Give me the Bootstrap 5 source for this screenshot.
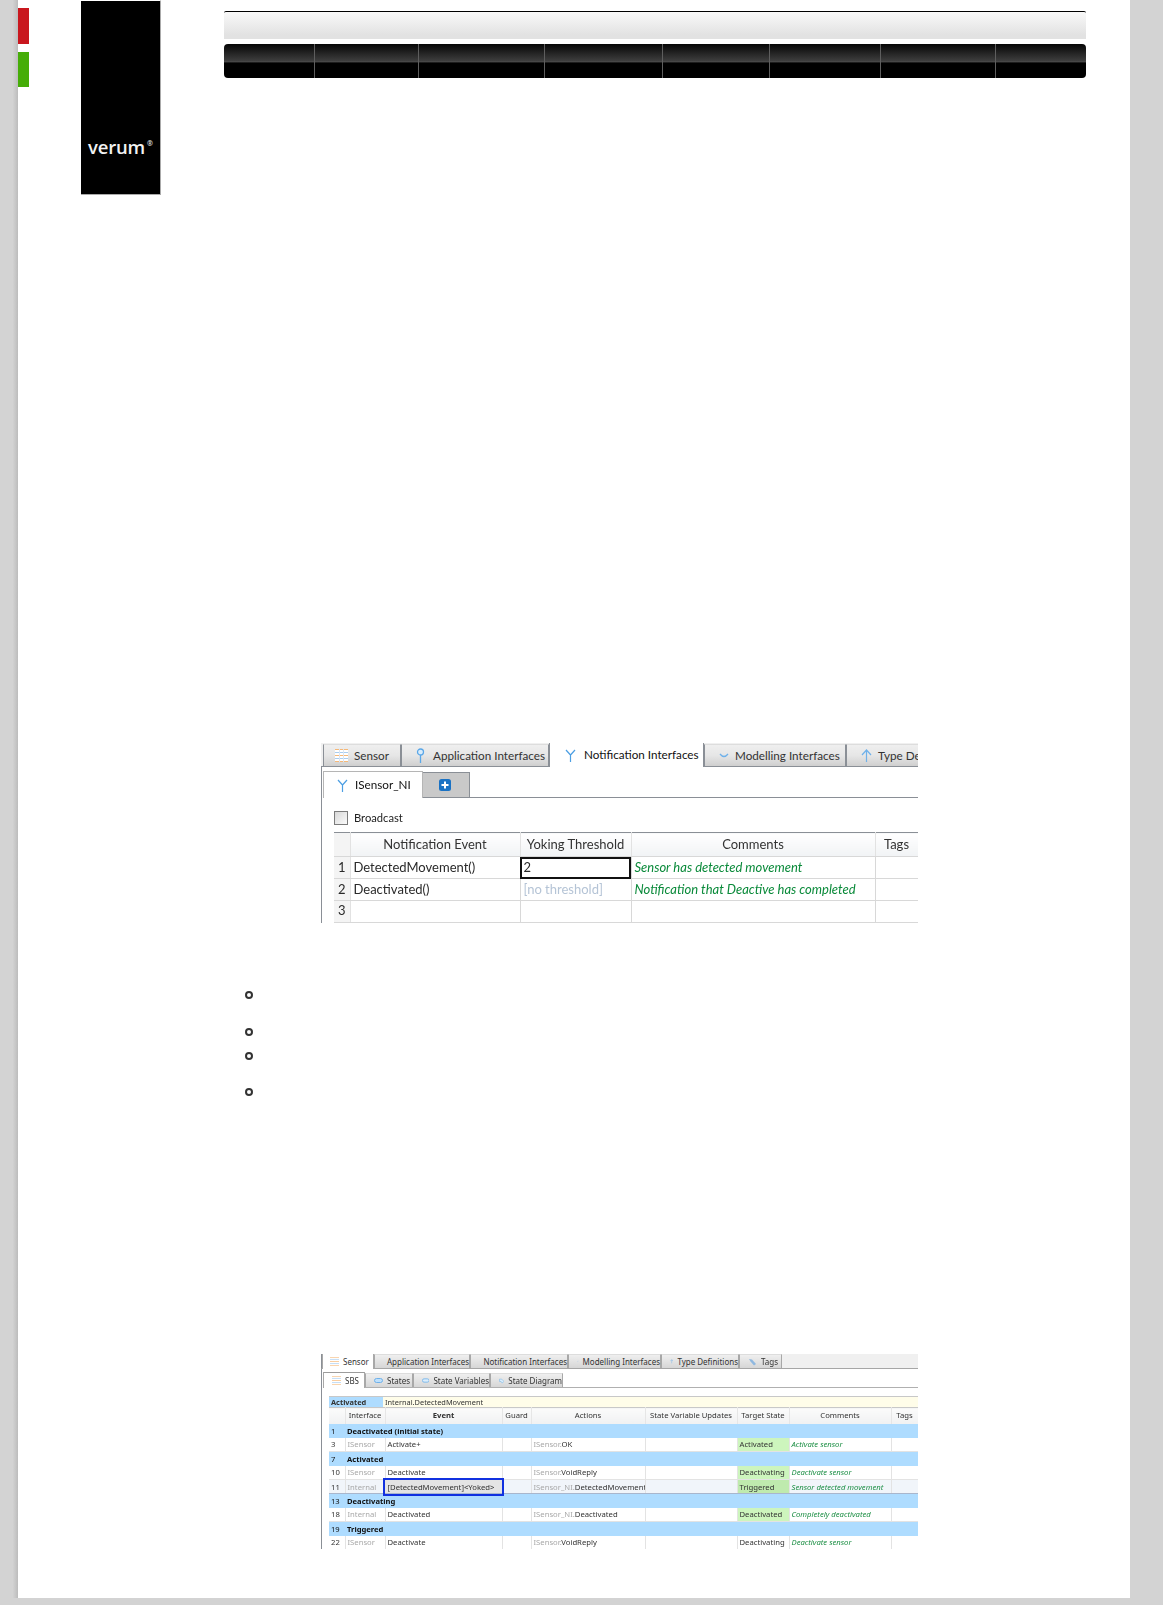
<!DOCTYPE html>
<html lang="en">
<head>
<meta charset="utf-8">
<title>Verum Dezyne</title>
<link rel="stylesheet" href="https://cdn.jsdelivr.net/npm/bootstrap@5.3.0/dist/css/bootstrap.min.css">
<style>
html,body{margin:0;background:#d3d3d3;}
body{font-family:"Lato","Liberation Sans",sans-serif;color:#222;}
.gutter{width:18px;flex:none;background:linear-gradient(to right,#d3d3d3 70%,#bcbcbc);}
.sheet{width:1112px;height:1598px;background:#fff;flex:none;}
.rail{width:11px;flex:none;padding-top:8px;}
.flag-red{height:36px;background:#c9171e;margin-bottom:8px;}
.flag-green{height:35px;background:#46ad08;}
.brand{width:80px;height:195px;margin-left:52px;flex:none;background:#000;border-right:1px solid #aaa;border-bottom:1px solid #aaa;border-top:1px solid #fff;color:#f2f2f2;padding:0 0 34px 7px;font-family:"Open Sans",sans-serif;font-weight:600;font-size:18.500px;line-height:26px;letter-spacing:-.2px;}
.brand sup{font-size:7px;top:-1.1em;margin-left:2px;}
.mainpane{width:862px;margin-left:63px;flex:none;}
.headbar{margin-top:11px;height:28px;border-top:1px solid #000;background:linear-gradient(#f9f9f9,#e2e2e2 85%);border-radius:2px 2px 0 0;}
.menu{margin-top:5px;height:34px;border-radius:4px;overflow:hidden;background:linear-gradient(#050505 0,#3e3e3e 50%,#4a4a4a 52%,#000 56%,#000 100%);list-style:none;padding:0;}
.menu li{border-right:1px solid #5e5e5e;}
.menu li:nth-child(1){width:91px}.menu li:nth-child(2){width:104px}.menu li:nth-child(3){width:126px}.menu li:nth-child(4){width:118px}.menu li:nth-child(5){width:107px}.menu li:nth-child(6){width:111px}.menu li:nth-child(7){width:115px}.menu li:nth-child(8){width:90px;border:0}
.shot{margin-left:97px;width:597px;overflow:hidden;position:relative;}
.shot1{margin-top:665px;height:180px;font-size:11.700px;filter:blur(.25px);}
.tabstrip{height:24px;background:#f0f0f0;border-bottom:1px solid #8a8f96;padding-left:2px;}
.tb{height:22px;border:1px solid #8a8f96;border-top-color:#ddd;border-bottom:0;background:linear-gradient(#efefef,#e6e6e6 50%,#cfcfcf);display:flex;align-items:center;white-space:nowrap;flex:none;color:#333;overflow:hidden;}
.tb svg{flex:none;}
.tb.on{height:25px;background:#fff;border-top-color:#8a8f96;margin-bottom:-1px;color:#111;}
.t1{width:78px;padding-left:11px;gap:6px}.t2{width:148px;padding-left:14px;gap:8px}.t3{width:155px;padding-left:15px;gap:8px}.t4{width:142px;padding-left:14px;gap:6px}.t5{width:80px;padding-left:14px;gap:6px}
.leftrule{border-left:1px solid #8a8f96;padding:4px 0 0 1px;height:156px;}
.subtabs{height:27px;border-bottom:1px solid #8a8f96;}
.tb.stb{width:100px;height:27px;background:#fff;border:1px solid #b5b5b5;border-bottom:0;padding-left:13px;gap:7px;margin-bottom:-1px;font-size:11.700px;z-index:1;}
.stb2{width:47px;height:25px;background:#c9c9c9;border-right:1px solid #8a8f96;border-top:1px solid #8a8f96;justify-content:center;padding-right:3px;}
.tickrow{height:14px;margin:13px 0 7px 11px;gap:6px;font-size:11.200px;line-height:14px;}
.tickbox{width:14px;height:14px;border:1px solid #7b7b7b;background:linear-gradient(135deg,#d8d8d8,#fbfbfb);}
.grid1{width:584px;margin-left:11px;table-layout:fixed;border-collapse:collapse;border-top:1px solid #8a8f96;font-size:13px;}
.grid1 th{font-weight:400;height:24px;background:linear-gradient(#fff,#f1f3f5);border-right:1px solid #e2e2e2;border-bottom:1px solid #d8d8d8;text-align:center;padding:1px 0 0;color:#333;white-space:nowrap;}
.grid1 td{height:22px;padding:1px 0 0 3px;border-right:1px solid #d8d8d8;border-bottom:1px solid #d8d8d8;white-space:nowrap;overflow:hidden;color:#2a2a2a;}
.grid1 tr:nth-child(2) td{height:21px;}
.grid1 td:first-child,.grid1 th:first-child{background:#f4f4f4;text-align:center;padding:0;border-right:1px solid #e2e2e2;}
.c1a{width:16px}.c1b{width:170px}.c1c{width:111px}.c1d{width:244px}.c1e{width:43px}
.note{color:#0a8a3a!important;font-style:italic;}
.dim{color:#b5c4d6!important;}
.focusbox{outline:2px solid #111;outline-offset:-2px;}
.dots{list-style:none;margin:68px 0 0 21px;padding:0;}
.dots li{position:relative;height:24px;}
.dots li.tall{height:37px;}
.dots li.tall2{height:36px;}
.dots li::before{content:"";position:absolute;left:0;top:0;width:8px;height:8px;border:2px solid #333;border-radius:50%;}
.shot2{margin-top:242px;height:195px;font-family:"Noto Sans",sans-serif;font-size:8px;color:#333;filter:blur(.35px);}
.shot2 .tabstrip2{height:15px;background:#f0f0f0;border-bottom:1px solid #a6a6a6;border-left:1px solid #8a8f96;}
.ttb{height:14px;border:1px solid #a8a8a8;border-top-color:#ddd;border-bottom:0;background:linear-gradient(#efefef,#d6d6d6);display:flex;align-items:center;gap:4px;padding-left:8px;white-space:nowrap;flex:none;}
.ttb.on{height:16px;background:#fff;border-top-color:#9c9c9c;margin-bottom:-1px;}
.w1{width:52px;padding-left:7px}.w2{width:96px}.w3{width:98px}.w4{width:93px}.w5{width:78px}.w6{width:43px}
.w7{width:42px}.w8{width:48px}.w9{width:77px}.w10{width:73px}
.frame2{border-left:1px solid #8a8f96;height:180px;padding-left:1px;padding-top:3px;}
.tabstrip3{height:16px;border-bottom:1px solid #b0b0b0;}
.statebar{height:11px;margin:8px 0 0 6px;border-top:1px solid #c8c8c8;background:#fffde9;line-height:10px;font-size:7.400px;}
.statebar b{display:inline-block;width:54px;height:10px;background:#aedcff;padding-left:2px;margin-right:2px;}
.grid2{width:589px;margin-left:6px;table-layout:fixed;border-collapse:collapse;font-size:7.700px;}
.grid2 th{height:16px;font-weight:400;background:linear-gradient(#fbfbfb,#f0f1f2);text-align:center;padding:0;border-right:1px solid #e6e6e6;border-top:1px solid #c8c8c8;white-space:nowrap;}
.grid2 td{height:14px;padding:0 0 0 2px;border-right:1px solid #e3e3e3;border-bottom:1px solid #e3e3e3;white-space:nowrap;overflow:hidden;line-height:10px;}
.g-a{width:16px}.g-b{width:40px}.g-c{width:117px}.g-d{width:29px}.g-e{width:114px}.g-f{width:92px}.g-g{width:52px}.g-h{width:102px}.g-i{width:27px}
.grid2 tr.hd td{background:#aedcff;border-right:0;border-bottom:0;font-weight:700;font-size:7.600px;color:#111;}
.grid2 tr.hd td:first-child{font-weight:400;}
.grid2 td.mute{color:#a8a8a8;}
.grid2 td.tgt{background:#cdf5bd;}
.grid2 tr.sel td{background:#f1f5fa;border-top:1px solid #a9b6cc;border-bottom:1px solid #a9b6cc;}
.grid2 tr.sel td.tgt{background:#bfeaae;}
.grid2 tr.sel td.pick{outline:2px solid #1131e0;outline-offset:0;background:#e4e4e4;overflow:visible;}
.grid2 .note{color:#1d8f45!important;}
.grid2 span.mute{color:#a8a8a8;}
</style>
</head>
<body>
<div class="d-flex">
  <div class="gutter"></div>
  <div class="sheet d-flex">
    <div class="rail"><div class="flag-red"></div><div class="flag-green"></div></div>
    <div class="brand d-flex align-items-end"><span>verum<sup>®</sup></span></div>
    <div class="mainpane">
      <div class="headbar"></div>
      <ul class="menu d-flex"><li></li><li></li><li></li><li></li><li></li><li></li><li></li><li></li></ul>

      <div class="shot shot1">
        <div class="tabstrip d-flex align-items-end">
          <div class="tb t1"><svg width="13" height="13" viewBox="0 0 13 13"><rect width="13" height="13" fill="#fff"/><path d="M0 .5h13M0 6.500h13M0 12.500h13" stroke="#f5b878"/><path d="M0 3.500h13M0 9.500h13" stroke="#a8cdf0"/><path d="M4.500 0v13M8.500 0v13" stroke="#dce6f2"/></svg>Sensor</div>
          <div class="tb t2"><svg width="9" height="15" viewBox="0 0 9 15"><circle cx="4.500" cy="4" r="3" fill="#d8ecfb" stroke="#5aa7e8" stroke-width="1.300"/><path d="M4.500 7v8" stroke="#5aa7e8" stroke-width="1.300"/></svg>Application Interfaces</div>
          <div class="tb t3 on"><svg width="11" height="13" viewBox="0 0 11 13"><path d="M1 1l4.500 5L10 1M5.500 6v7" fill="none" stroke="#4d9fe3" stroke-width="1.200"/></svg>Notification Interfaces</div>
          <div class="tb t4"><svg width="10" height="6" viewBox="0 0 10 6"><path d="M1 1q4 5 8 0" fill="none" stroke="#6fb1ea" stroke-width="1.300"/></svg>Modelling Interfaces</div>
          <div class="tb t5"><svg width="11" height="14" viewBox="0 0 11 14"><path d="M1 6l4.500-5L10 6M5.500 1v12" fill="none" stroke="#6fb1ea" stroke-width="1.200"/></svg>Type Definitions</div>
        </div>
        <div class="leftrule">
          <div class="subtabs d-flex align-items-end">
            <div class="tb on stb"><svg width="11" height="13" viewBox="0 0 11 13"><path d="M1 1l4.500 5L10 1M5.500 6v7" fill="none" stroke="#4d9fe3" stroke-width="1.200"/></svg>ISensor_NI</div>
            <div class="stb2 d-flex align-items-center"><svg width="12" height="12" viewBox="0 0 12 12"><rect width="12" height="12" rx="2.500" fill="#1a72c4"/><path d="M6 2.500v7M2.500 6h7" stroke="#fff" stroke-width="2"/></svg></div>
          </div>
          <div class="tickrow d-flex align-items-center"><span class="tickbox"></span><span>Broadcast</span></div>
          <table class="grid1">
            <colgroup><col class="c1a"><col class="c1b"><col class="c1c"><col class="c1d"><col class="c1e"></colgroup>
            <thead><tr><th></th><th>Notification Event</th><th>Yoking Threshold</th><th>Comments</th><th>Tags</th></tr></thead>
            <tbody>
              <tr><td>1</td><td>DetectedMovement()</td><td class="focusbox">2</td><td class="note">Sensor has detected movement</td><td></td></tr>
              <tr><td>2</td><td>Deactivated()</td><td class="dim">[no threshold]</td><td class="note">Notification that Deactive has completed</td><td></td></tr>
              <tr><td>3</td><td></td><td></td><td></td><td></td></tr>
            </tbody>
          </table>
        </div>
      </div>

      <ul class="dots">
        <li class="tall"></li><li></li><li class="tall2"></li><li></li>
      </ul>

      <div class="shot shot2">
        <div class="tabstrip2 d-flex align-items-end">
          <div class="ttb on w1"><svg width="9" height="9" viewBox="0 0 13 13"><rect width="13" height="13" fill="#fff"/><path d="M0 .5h13M0 6.500h13M0 12.500h13" stroke="#f5b878"/><path d="M0 3.500h13M0 9.500h13" stroke="#a8cdf0"/></svg>Sensor</div>
          <div class="ttb w2"><svg width="6" height="10" viewBox="0 0 9 15"><circle cx="4.500" cy="4" r="3" fill="#d8ecfb" stroke="#5aa7e8" stroke-width="1.300"/><path d="M4.500 7v8" stroke="#5aa7e8" stroke-width="1.300"/></svg>Application Interfaces</div>
          <div class="ttb w3"><svg width="7" height="9" viewBox="0 0 11 13"><path d="M1 1l4.500 5L10 1M5.500 6v7" fill="none" stroke="#4d9fe3" stroke-width="1.400"/></svg>Notification Interfaces</div>
          <div class="ttb w4"><svg width="7" height="5" viewBox="0 0 10 6"><path d="M1 1q4 5 8 0" fill="none" stroke="#6fb1ea" stroke-width="1.400"/></svg>Modelling Interfaces</div>
          <div class="ttb w5"><svg width="7" height="9" viewBox="0 0 11 14"><path d="M1 6l4.500-5L10 6M5.500 1v12" fill="none" stroke="#6fb1ea" stroke-width="1.400"/></svg>Type Definitions</div>
          <div class="ttb w6"><svg width="9" height="8" viewBox="0 0 9 8"><path d="M1 1l3 .5 4 4.500-2 1.500-3.500-4z" fill="#8fb8e0"/></svg>Tags</div>
        </div>
        <div class="frame2">
          <div class="tabstrip3 d-flex align-items-end">
            <div class="ttb on w7"><svg width="9" height="9" viewBox="0 0 13 13"><rect width="13" height="13" fill="#fff"/><path d="M0 .5h13M0 6.500h13M0 12.500h13" stroke="#f5b878"/><path d="M0 3.500h13M0 9.500h13" stroke="#a8cdf0"/></svg>SBS</div>
            <div class="ttb w8"><svg width="9" height="5" viewBox="0 0 9 5"><rect x=".5" y=".5" width="8" height="4" rx="2" fill="#bfe0fb" stroke="#6fb1ea"/></svg>States</div>
            <div class="ttb w9"><svg width="9" height="5" viewBox="0 0 9 5"><rect x=".5" y=".5" width="8" height="4" rx="2" fill="#dceefc" stroke="#6fb1ea"/></svg>State Variables</div>
            <div class="ttb w10"><svg width="10" height="10" viewBox="0 0 10 10"><path d="M1 1.500h4l2 2 2 2-3 3.500-2-3H1z" fill="#dceefc" stroke="#5aa7e8" stroke-width=".8"/></svg>State Diagram</div>
          </div>
          <div class="statebar"><b>Activated</b>Internal.DetectedMovement</div>
          <table class="grid2">
            <colgroup><col class="g-a"><col class="g-b"><col class="g-c"><col class="g-d"><col class="g-e"><col class="g-f"><col class="g-g"><col class="g-h"><col class="g-i"></colgroup>
            <thead><tr><th></th><th>Interface</th><th><b>Event</b></th><th>Guard</th><th>Actions</th><th>State Variable Updates</th><th>Target State</th><th>Comments</th><th>Tags</th></tr></thead>
            <tbody>
              <tr class="hd"><td>1</td><td colspan="8">Deactivated (initial state)</td></tr>
              <tr><td>3</td><td class="mute">ISensor</td><td>Activate+</td><td></td><td><span class="mute">ISensor.</span>OK</td><td></td><td class="tgt">Activated</td><td class="note">Activate sensor</td><td></td></tr>
              <tr class="hd"><td>7</td><td colspan="8">Activated</td></tr>
              <tr><td>10</td><td class="mute">ISensor</td><td>Deactivate</td><td></td><td><span class="mute">ISensor.</span>VoidReply</td><td></td><td class="tgt">Deactivating</td><td class="note">Deactivate sensor</td><td></td></tr>
              <tr class="sel"><td>11</td><td class="mute">Internal</td><td class="pick">[DetectedMovement]&lt;Yoked&gt;</td><td></td><td><span class="mute">ISensor_NI.</span>DetectedMovement</td><td></td><td class="tgt">Triggered</td><td class="note">Sensor detected movement</td><td></td></tr>
              <tr class="hd"><td>13</td><td colspan="8">Deactivating</td></tr>
              <tr><td>18</td><td class="mute">Internal</td><td>Deactivated</td><td></td><td><span class="mute">ISensor_NI.</span>Deactivated</td><td></td><td class="tgt">Deactivated</td><td class="note">Completely deactivated</td><td></td></tr>
              <tr class="hd"><td>19</td><td colspan="8">Triggered</td></tr>
              <tr><td>22</td><td class="mute">ISensor</td><td>Deactivate</td><td></td><td><span class="mute">ISensor.</span>VoidReply</td><td></td><td>Deactivating</td><td class="note">Deactivate sensor</td><td></td></tr>
            </tbody>
          </table>
        </div>
      </div>
    </div>
  </div>
  <div class="flex-grow-1"></div>
</div>
<script src="https://cdn.jsdelivr.net/npm/bootstrap@5.3.0/dist/js/bootstrap.bundle.min.js"></script>
</body>
</html>
